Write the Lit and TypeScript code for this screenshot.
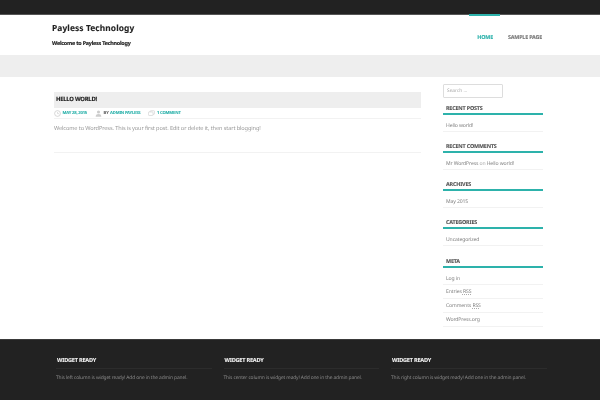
import { LitElement, html, css, svg } from "lit";
import { customElement } from "lit/decorators.js";

const widgets: { title: string; items: unknown[] }[] = [
  { title: "RECENT POSTS", items: ["Hello world!"] },
  { title: "RECENT COMMENTS", items: [html`Mr WordPress <span class="on">on</span> Hello world!`] },
  { title: "ARCHIVES", items: ["May 2015"] },
  { title: "CATEGORIES", items: ["Uncategorized"] },
  {
    title: "META",
    items: [
      "Log in",
      html`Entries <span class="abbr">RSS</span>`,
      html`Comments <span class="abbr">RSS</span>`,
      "WordPress.org",
    ],
  },
];

const clock = svg`<circle cx="4.5" cy="4.5" r="3.7" fill="none" stroke="#ccc" stroke-width="1"/><path d="M4.5 2.5v2.2h2" fill="none" stroke="#ccc" stroke-width=".8"/>`;
const user = svg`<circle cx="4.5" cy="2.6" r="2" fill="#ccc"/><path d="M.8 8.6c.2-2.6 1.6-3.4 3.7-3.4s3.5.8 3.7 3.4z" fill="#ccc"/>`;
const bubble = svg`<rect x="2.5" y="1" width="6" height="4.5" rx="1" fill="none" stroke="#ccc" stroke-width=".8"/><rect x=".5" y="2.5" width="6" height="4.5" rx="1" fill="#fff" stroke="#ccc" stroke-width=".8"/>`;

@customElement("app-root")
export class AppRoot extends LitElement {
  static styles = css`
    :host {
      display: block;
      width: 600px;
      height: 400px;
      overflow: hidden;
      background: #fff;
      font-family: "Noto Sans", "Open Sans", sans-serif;
      text-rendering: geometricPrecision;
    }
    .page { display: flex; flex-direction: column; height: 400px; will-change: transform; }
    .top { height: 14px; background: #222; border-bottom: 1px solid #555; flex: none; }
    .header {
      height: 40px;
      flex: none;
      display: flex;
      justify-content: space-between;
      padding: 0 58px 0 52px;
    }
    .brand { display: flex; flex-direction: column; }
    .site {
      font-size: 8.4px;
      line-height: 12px;
      font-weight: 700;
      color: #222;
      margin-top: 8px;
      letter-spacing: 0.1px;
      -webkit-text-stroke: 0.1px #222;
    }
    .tag {
      font-size: 5.4px;
      line-height: 8px;
      font-weight: 700;
      color: #222;
      margin-top: 4px;
      letter-spacing: -0.22px;
      -webkit-text-stroke: 0.15px #222;
    }
    .nav { display: flex; }
    .nav a {
      font-size: 5.4px;
      line-height: 8px;
      font-weight: 700;
      color: #777;
      padding-top: 17.5px;
      letter-spacing: -0.2px;
      -webkit-text-stroke: 0.1px currentColor;
    }
    .nav a.cur {
      color: #2db2ab;
      position: relative;
      margin-right: 15px;
    }
    .nav a.cur::before {
      content: "";
      position: absolute;
      left: -8px;
      right: -7px;
      top: -1px;
      height: 2px;
      background: #2db2ab;
    }
    .band { height: 22px; background: #eee; flex: none; }
    .body {
      flex: 1;
      display: flex;
      padding: 7px 57px 0 54px;
      gap: 22px;
      min-height: 0;
    }
    .main { width: 367px; flex: none; padding-top: 8px; }
    .ptitle {
      height: 16px;
      background: #eee;
      padding-left: 2px;
      font-size: 5.9px;
      line-height: 15px;
      font-weight: 700;
      color: #222;
      letter-spacing: -0.25px;
      -webkit-text-stroke: 0.15px #222;
    }
    .meta {
      display: flex;
      align-items: center;
      height: 10px;
      border-bottom: 1px solid #f2f2f2;
      font-size: 4.2px;
      font-weight: 700;
      color: #666;
      letter-spacing: -0.2px;
      -webkit-text-stroke: 0.08px currentColor;
    }
    .meta svg { width: 7px; height: 7px; flex: none; margin-right: 1.5px; }
    .meta .i { display: flex; align-items: center; margin-right: 8px; }
    .meta .t { color: #2db2ab; }
    .meta .by { margin-right: 1.5px; }
    .content {
      font-size: 5.6px;
      line-height: 8px;
      color: #999;
      padding: 5px 0 20px;
      border-bottom: 1px solid #f2f2f2;
      letter-spacing: -0.11px;
    }
    .side { width: 100px; flex: none; }
    .search {
      width: 60px;
      height: 14px;
      box-sizing: border-box;
      border: 1px solid #ddd;
      border-radius: 1px;
      font-size: 4.8px;
      line-height: 12px;
      color: #aaa;
      padding-left: 3px;
      margin-bottom: 2.5px;
    }
    .widget { margin-bottom: 7.3px; }
    .wt {
      font-size: 5.4px;
      line-height: 8px;
      font-weight: 700;
      color: #555;
      padding-left: 3px;
      padding-top: 3px;
      border-bottom: 2px solid #2db2ab;
      height: 9px;
      letter-spacing: -0.17px;
      -webkit-text-stroke: 0.1px #555;
    }
    .li {
      height: 14px;
      line-height: 13px;
      font-size: 5.1px;
      color: #808080;
      padding: 1px 0 0 3px;
      box-sizing: border-box;
      border-bottom: 1px solid #f2f2f2;
      display: block;
      letter-spacing: -0.12px;
    }
    .li:first-child { height: 17px; padding-top: 5px; }
    .on { color: #aaa; }
    .abbr {
      text-decoration: underline dotted #aaa;
      text-underline-offset: 1px;
    }
    .footer {
      height: 61px;
      flex: none;
      background: #222;
      border-top: 1px solid #3a3a3a;
      box-sizing: border-box;
      display: flex;
      padding: 16px 0 0 56px;
      gap: 12px;
    }
    .col { width: 155.5px; flex: none; }
    .ft {
      font-size: 5.6px;
      line-height: 8px;
      font-weight: 700;
      color: #eee;
      padding: 0 0 4px 1px;
      border-bottom: 1px solid #2c2c2c;
      height: 8px;
      letter-spacing: -0.22px;
      -webkit-text-stroke: 0.1px #eee;
    }
    .fx {
      font-size: 4.9px;
      line-height: 8px;
      color: #8a8a8a;
      margin-top: 5px;
      white-space: nowrap;
      letter-spacing: -0.14px;
    }
  `;

  render() {
    return html`<div class="page">
      <div class="top"></div>
      <header class="header">
        <div class="brand">
          <div class="site">Payless Technology</div>
          <div class="tag">Welcome to Payless Technology</div>
        </div>
        <nav class="nav">
          <a class="cur">HOME</a>
          <a>SAMPLE PAGE</a>
        </nav>
      </header>
      <div class="band"></div>
      <div class="body">
        <main class="main">
          <div class="ptitle">HELLO WORLD!</div>
          <div class="meta">
            <span class="i"><svg viewBox="0 0 9 9">${clock}</svg><span class="t">MAY 28, 2015</span></span>
            <span class="i"><svg viewBox="0 0 9 9">${user}</svg><span class="by">BY</span><span class="t">ADMIN PAYLESS</span></span>
            <span class="i"><svg viewBox="0 0 9 9">${bubble}</svg><span class="t">1 COMMENT</span></span>
          </div>
          <div class="content">Welcome to WordPress. This is your first post. Edit or delete it, then start blogging!</div>
        </main>
        <aside class="side">
          <div class="search">Search ...</div>
          ${widgets.map(
            (w) => html`<section class="widget">
              <div class="wt">${w.title}</div>
              <div>${w.items.map((i) => html`<span class="li">${i}</span>`)}</div>
            </section>`
          )}
        </aside>
      </div>
      <footer class="footer">
        <div class="col"><div class="ft">WIDGET READY</div><div class="fx">This left column is widget ready! Add one in the admin panel.</div></div>
        <div class="col"><div class="ft">WIDGET READY</div><div class="fx">This center column is widget ready! Add one in the admin panel.</div></div>
        <div class="col"><div class="ft">WIDGET READY</div><div class="fx">This right column is widget ready! Add one in the admin panel.</div></div>
      </footer>
    </div>`;
  }
}
